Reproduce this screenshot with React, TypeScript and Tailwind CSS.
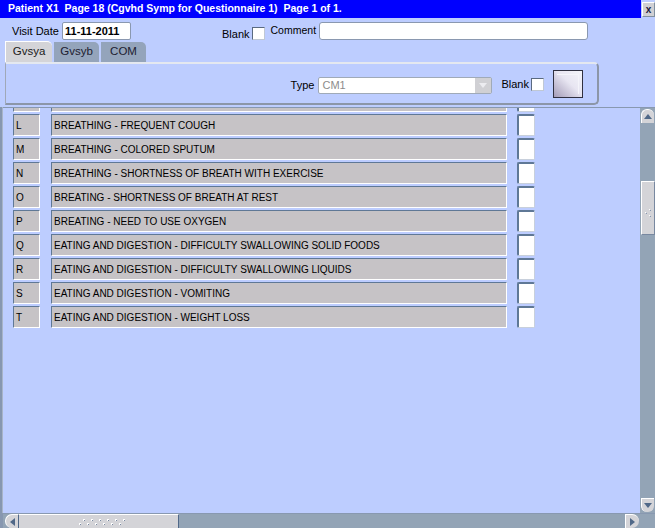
import React from "react";

const rows: [string, string][] = [
  ["", ""],
  ["L", "BREATHING - FREQUENT COUGH"],
  ["M", "BREATHING - COLORED SPUTUM"],
  ["N", "BREATHING - SHORTNESS OF BREATH WITH EXERCISE"],
  ["O", "BREATING - SHORTNESS OF BREATH AT REST"],
  ["P", "BREATING - NEED TO USE OXYGEN"],
  ["Q", "EATING AND DIGESTION - DIFFICULTY SWALLOWING SOLID FOODS"],
  ["R", "EATING AND DIGESTION - DIFFICULTY SWALLOWING LIQUIDS"],
  ["S", "EATING AND DIGESTION - VOMITING"],
  ["T", "EATING AND DIGESTION - WEIGHT LOSS"],
];

function Row({ l, t, first }: { l: string; t: string; first?: boolean }) {
  return (
    <div className={`flex h-[22px] mb-[2px] shrink-0 ${first ? "mt-[-18px]" : ""}`}>
      <div className="ml-[10px] w-[27px] h-full bg-[#c6c3c6] border-t border-l border-b border-r border-t-[#5f7896] border-l-[#5f7896] border-b-white border-r-white flex items-center pl-[2px] text-[10px] text-black">
        {l}
      </div>
      <div className="ml-[11px] w-[456px] h-full bg-[#c6c3c6] border-t border-l border-b border-r border-t-[#5f7896] border-l-[#5f7896] border-b-white border-r-white flex items-center pl-[2px] text-[10px] text-black whitespace-nowrap">
        {t}
      </div>
      <div className="ml-[10px] w-[18px] h-full bg-white rounded-[2px] border-t-2 border-l-2 border-b border-r border-t-[#5f7896] border-l-[#5f7896] border-b-[#c8d0dc] border-r-[#c8d0dc]" />
    </div>
  );
}

function Check() {
  return (
    <div className="w-[13px] h-[13px] bg-white border-t border-l border-b border-r border-t-[#5a6a80] border-l-[#5a6a80] border-b-[#c0c8d4] border-r-[#c0c8d4]" />
  );
}

export default function App() {
  return (
    <div className="w-[655px] h-[528px] bg-[#bdcdff] overflow-hidden flex flex-col font-['Liberation_Sans',Arial,sans-serif] text-[11px] text-black">
      {/* title bar */}
      <div className="flex h-[18px] shrink-0">
        <div className="flex-1 bg-[#0000ff] text-white font-bold text-[10.5px] flex items-center pl-[8px] whitespace-pre">
          {"Patient X1  Page 18 (Cgvhd Symp for Questionnaire 1)  Page 1 of 1."}
        </div>
        <div className="w-[14px] bg-[#bdcdff] flex items-start justify-end">
          <div className="w-[13px] h-[15px] mt-[2px] bg-[#d0d0d4] border-t border-l border-white border-b border-r border-b-[#8090a0] border-r-[#8090a0] flex items-center justify-center text-[10px] font-bold text-[#202040]">
            x
          </div>
        </div>
      </div>

      {/* visit date row */}
      <div className="flex items-center h-[18px] mt-[4px] shrink-0">
        <span className="ml-[12px] w-[50px]">Visit Date</span>
        <div className="w-[69px] h-[18px] bg-white border border-[#8a98b0] rounded-[2px] flex items-center pl-[2px] font-bold">
          11-11-2011
        </div>
        <span className="ml-[91px] mt-[6px]">Blank</span>
        <div className="ml-[2px] mt-[4px]">
          <Check />
        </div>
        <span className="ml-[6px] w-[48px] text-[10.5px] whitespace-nowrap">Comment</span>
        <div className="w-[269px] h-[18px] bg-white border border-[#8a98b0] rounded-[3px]" />
      </div>

      {/* tabs */}
      <div className="flex h-[20px] mt-[2px] shrink-0 items-end">
        <div className="ml-[5px] w-[47px] h-[21px] bg-[#d4d4d8] border-l border-t border-white rounded-tr-[5px] flex items-center justify-center text-[11.5px] text-[#202020]">
          Gvsya
        </div>
        <div className="ml-[2px] w-[45px] h-[20px] bg-[#94a4bb] rounded-tr-[5px] flex items-center justify-center text-[11.5px] text-[#202030]">
          Gvsyb
        </div>
        <div className="ml-[2px] w-[45px] h-[20px] bg-[#94a4bb] rounded-tr-[5px] flex items-center justify-center text-[11.5px] text-[#202030]">
          COM
        </div>
      </div>

      {/* tab panel */}
      <div className="ml-[5px] w-[594px] h-[43px] shrink-0 border-t-2 border-l border-t-[#e4e8f0] border-l-[#a0a8b8] border-r-2 border-b-2 border-r-[#8c96a8] border-b-[#8c96a8] rounded-tr-[5px] rounded-br-[5px] flex items-center justify-end pr-[14px]">
        <span className="mt-[4px]">Type</span>
        <div className="ml-[4px] mt-[4px] w-[174px] h-[17px] bg-white border border-[#a0aab8] rounded-[2px] flex items-center">
          <span className="flex-1 pl-[3px] text-[#8c8c8c]">CM1</span>
          <div className="w-[16px] h-full bg-[#d0d0d4] flex items-center justify-center">
            <svg width="8" height="5" viewBox="0 0 8 5">
              <path d="M0 0 L8 0 L4 5 Z" fill="#ececf0" />
            </svg>
          </div>
        </div>
        <span className="ml-[9px] mt-[2px]">Blank</span>
        <div className="ml-[2px] mt-[2px]">
          <Check />
        </div>
        <div className="ml-[9px] w-[30px] h-[28px] border border-[#303040] bg-[linear-gradient(to_top_right,#a49cb8,#e8e6f2_55%,#f4f4fa)] p-[3px]">
          <div className="w-full h-full border-t border-r border-[#f4f4fa]" />
        </div>
      </div>

      {/* scroll section */}
      <div className="flex flex-1 mt-[2px] min-h-0">
        <div className="w-[3px] bg-[#8797b0] border-r border-[#a8b4c8]" />
        <div className="flex-1 border-t border-t-[#8898b0] flex flex-col overflow-hidden">
          {rows.map(([l, t], i) => (
            <Row key={i} l={l} t={t} first={i === 0} />
          ))}
        </div>
        {/* vertical scrollbar */}
        <div className="w-[15px] bg-[#93a4b6] border-t border-t-[#8898b0] flex flex-col items-center">
          <div className="mt-[1px] w-[13px] h-[14px] bg-[#d4d4d8] rounded-t-[6px] border-t border-l border-white flex items-center justify-center">
            <svg width="8" height="5" viewBox="0 0 8 5">
              <path d="M0 5 L8 5 L4 0 Z" fill="#506888" />
            </svg>
          </div>
          <div className="mt-[58px] w-[14px] h-[54px] bg-[#d4d4d8] border-t border-l border-white border-r border-b border-r-[#7888a0] border-b-[#7888a0] flex items-center justify-center">
            <svg width="8" height="9" viewBox="0 0 8 9" className="mt-[10px]">
              <rect x="5" y="0" width="1" height="1" fill="#ffffff" />
              <rect x="6" y="1" width="1" height="1" fill="#8898b0" />
              <rect x="1" y="3" width="1" height="1" fill="#ffffff" />
              <rect x="2" y="4" width="1" height="1" fill="#8898b0" />
              <rect x="5" y="6" width="1" height="1" fill="#ffffff" />
              <rect x="6" y="7" width="1" height="1" fill="#8898b0" />
            </svg>
          </div>
          <div className="flex-1" />
          <div className="mb-[1px] w-[13px] h-[14px] bg-[#d4d4d8] rounded-b-[6px] border-t border-l border-white flex items-center justify-center">
            <svg width="8" height="5" viewBox="0 0 8 5">
              <path d="M0 0 L8 0 L4 5 Z" fill="#506888" />
            </svg>
          </div>
        </div>
      </div>

      {/* horizontal scrollbar */}
      <div className="h-[15px] shrink-0 flex bg-[#93a4b6] border-t border-t-[#8898b0]">
        <div className="w-[3px] bg-[#8797b0]" />
        <div className="ml-[2px] w-[13px] h-full bg-[#d4d4d8] rounded-l-[7px] border-l border-t border-white flex items-center justify-center">
          <svg width="5" height="8" viewBox="0 0 5 8">
            <path d="M5 0 L5 8 L0 4 Z" fill="#506888" />
          </svg>
        </div>
        <div className="w-[161px] h-full bg-[#d4d4d8] border-l border-l-[#506888] border-r border-r-[#506888] border-t border-t-white flex items-center justify-center">
          <svg width="52" height="8" viewBox="0 0 52 8" className="ml-[12px]">
            {[0, 1, 2, 3, 4, 5].map((i) => (
              <g key={i}>
                <rect x={4 + i * 8} y={1} width="2" height="2" fill="#ffffff" />
                <rect x={5 + i * 8} y={2} width="1" height="1" fill="#7888a0" />
                <rect x={i * 8} y={5} width="2" height="2" fill="#ffffff" />
                <rect x={1 + i * 8} y={6} width="1" height="1" fill="#7888a0" />
              </g>
            ))}
          </svg>
        </div>
        <div className="flex-1" />
        <div className="mr-[16px] w-[14px] h-full bg-[#d4d4d8] rounded-r-[7px] border-l border-t border-white flex items-center justify-center">
          <svg width="5" height="8" viewBox="0 0 5 8">
            <path d="M0 0 L0 8 L5 4 Z" fill="#506888" />
          </svg>
        </div>
      </div>
    </div>
  );
}
